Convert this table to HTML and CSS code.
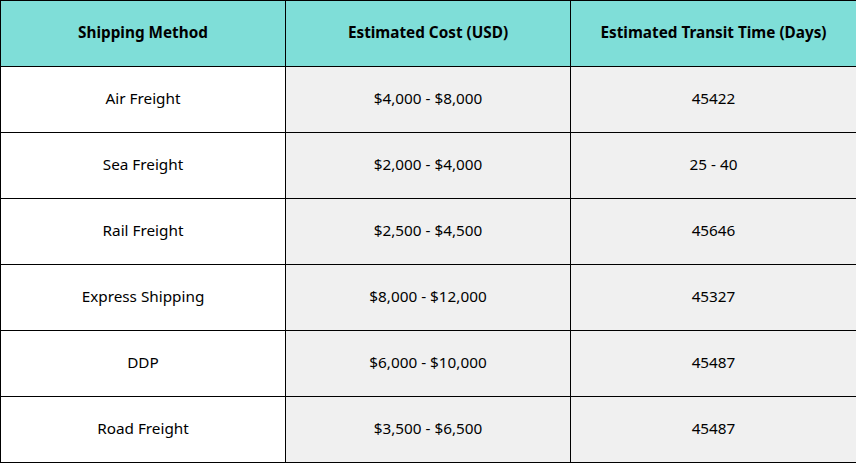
FILE: index.html
```html
<!DOCTYPE html>
<html>
<head>
<meta charset="utf-8">
<link rel="stylesheet" href="styles.css">
</head>
<body>
<table class="ship-table">
  <colgroup>
    <col class="c1"><col class="c2"><col class="c3">
  </colgroup>
  <thead>
    <tr>
      <th>Shipping Method</th>
      <th>Estimated Cost (USD)</th>
      <th>Estimated Transit Time (Days)</th>
    </tr>
  </thead>
  <tbody>
    <tr><td>Air Freight</td><td>$4,000 - $8,000</td><td>45422</td></tr>
    <tr><td>Sea Freight</td><td>$2,000 - $4,000</td><td>25 - 40</td></tr>
    <tr><td>Rail Freight</td><td>$2,500 - $4,500</td><td>45646</td></tr>
    <tr><td>Express Shipping</td><td>$8,000 - $12,000</td><td>45327</td></tr>
    <tr><td>DDP</td><td>$6,000 - $10,000</td><td>45487</td></tr>
    <tr><td>Road Freight</td><td>$3,500 - $6,500</td><td>45487</td></tr>
  </tbody>
</table>
</body>
</html>
```
FILE: styles.css
```css
html, body {
  margin: 0;
  padding: 0;
  background: #ffffff;
}
.ship-table {
  border-collapse: collapse;
  table-layout: fixed;
  width: 856px;
  font-family: "Noto Sans", "Open Sans", sans-serif;
  font-size: 15.3px;
  color: #000;
}
.c1 { width: 285px; }
.c2 { width: 285px; }
.c3 { width: 286px; }
.ship-table th,
.ship-table td {
  border: 1px solid #000;
  height: 61px;
  padding: 0 0 4px 0;
  text-align: center;
  vertical-align: middle;
}
.ship-table th {
  background: #7fded8;
  font-weight: 700;
}
.ship-table td:nth-child(2),
.ship-table td:nth-child(3) {
  background: #f0f0f0;
}
```
